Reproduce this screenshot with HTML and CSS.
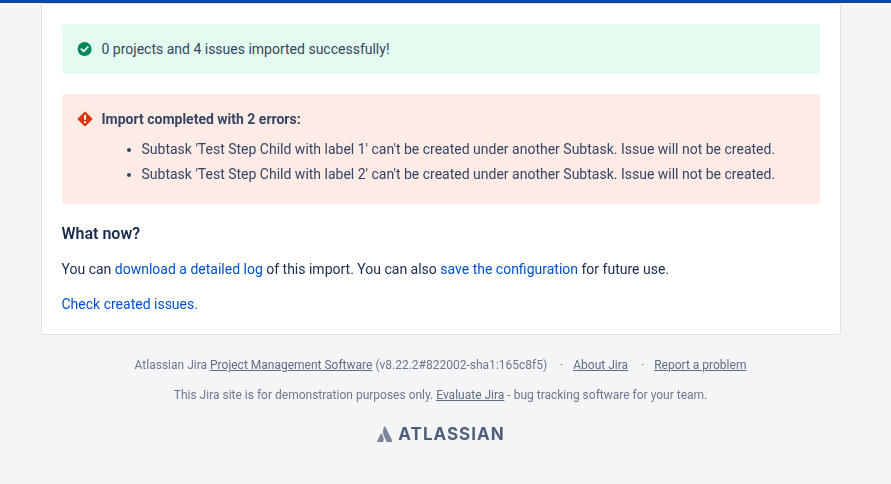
FILE: index.html
```html
<!DOCTYPE html>
<html lang="en">
<head>
    <meta charset="UTF-8">
    <title>Import results</title>
    <link rel="stylesheet" href="styles.css">
</head>
<body>
    <div class="top-bar"></div>
    <div class="page">
        <main class="card">
            <div class="message success">
                <svg class="icon" viewBox="0 0 16 16" width="16" height="16">
                    <circle cx="7.600" cy="8" r="7" fill="#00875a"/>
                    <path d="M4.400 8.200l2.200 2.200 4.200-4.400" fill="none" stroke="#fff" stroke-width="1.8" stroke-linecap="round" stroke-linejoin="round"/>
                </svg>
                <p>0 projects and 4 issues imported successfully!</p>
            </div>
            <div class="message error">
                <svg class="icon" viewBox="0 0 16 16" width="16" height="16">
                    <path d="M8 .8c.4 0 .7.1 1 .4l5.800 5.800c.6.6.6 1.400 0 2l-5.800 5.800c-.6.6-1.400.6-2 0L1.200 9c-.6-.6-.6-1.400 0-2L7 1.200c.3-.3.6-.4 1-.4z" fill="#de350b"/>
                    <rect x="7" y="3.800" width="2" height="5.200" rx="1" fill="#fff"/>
                    <circle cx="8" cy="11.200" r="1.100" fill="#fff"/>
                </svg>
                <div>
                    <p class="message-title">Import completed with 2 errors:</p>
                    <ul>
                        <li>Subtask 'Test Step Child with label 1' can't be created under another Subtask. Issue will not be created.</li>
                        <li>Subtask 'Test Step Child with label 2' can't be created under another Subtask. Issue will not be created.</li>
                    </ul>
                </div>
            </div>
            <h2>What now?</h2>
            <p class="next">You can <a href="#">download a detailed log</a> of this import. You can also <a href="#">save the configuration</a> for future use.</p>
            <p class="check"><a href="#">Check created issues.</a></p>
        </main>
        <footer>
            <ul class="footer-links">
                <li>Atlassian Jira <a href="#">Project Management Software</a> (v8.22.2#822002-sha1:165c8f5)</li>
                <li><a href="#">About Jira</a></li>
                <li><a href="#">Report a problem</a></li>
            </ul>
            <p class="footer-note">This Jira site is for demonstration purposes only. <a href="#">Evaluate Jira</a> - bug tracking software for your team.</p>
            <div class="logo">
                <svg viewBox="-1 0 16 16" width="16" height="16">
                    <path d="M4.700 7.200c-.2-.3-.5-.2-.7.1L.1 15.300c-.2.300 0 .7.400.7h5.300c.2 0 .3-.1.400-.2 1.100-2.400.4-6.100-2-8.600z" fill="#7a869a"/>
                    <path d="M7.500 .5c-2 3.200-1.900 6.500-.6 9.200l2.700 6c.1.200.2.300.4.300h5.300c.4 0 .6-.4.400-.7L8.200 .5C8 .1 7.700.1 7.500.5z" fill="#7a869a"/>
                </svg>
                <span>ATLASSIAN</span>
            </div>
        </footer>
    </div>
</body>
</html>
```

FILE: styles.css
```css
* {
    margin: 0;
    padding: 0;
    box-sizing: border-box;
}

body {
    background-color: #f4f5f7;
    color: #172b4d;
    font-family: Roboto, sans-serif;
    font-size: 14px;
    line-height: 20px;
    height: 484px;
    overflow: hidden;
}

a {
    color: #0052cc;
    text-decoration: none;
}

.top-bar {
    height: 3px;
    background-color: #0747a6;
}

.page {
    width: 881px;
    will-change: opacity;
}

.card {
    width: 800px;
    height: 332px;
    margin: 0 auto;
    padding: 20px;
    background-color: white;
    border: 1px solid #dfe1e6;
    border-radius: 3px;
}

.message {
    display: flex;
    gap: 9px;
    padding: 15px;
    border-radius: 3px;
    color: #344563;
}

.message .icon {
    flex-shrink: 0;
    margin-top: 2px;
}

.success {
    background-color: #e3fcef;
    height: 50px;
    margin-bottom: 20px;
}

.error {
    background-color: #ffebe6;
    height: 110px;
}

.message-title {
    font-weight: 700;
}

.message ul {
    padding-left: 40px;
    margin-top: 10px;
}

.message li {
    margin-top: 5px;
}

h2 {
    font-size: 16px;
    font-weight: 600;
    line-height: 20px;
    margin-top: 20px;
}

.next {
    margin-top: 15px;
}

.check {
    margin-top: 15px;
}

footer {
    color: #6b778c;
    font-size: 12px;
    line-height: 16px;
    text-align: center;
    padding-top: 22px;
}

footer a {
    color: #5e6c84;
    text-decoration: underline;
}

.footer-links {
    display: flex;
    justify-content: center;
    list-style: none;
}

.footer-links li + li::before {
    content: "·";
    margin: 0 10px 0 13px;
}

.footer-note {
    margin-top: 14px;
}

.logo {
    display: flex;
    justify-content: center;
    align-items: center;
    gap: 6px;
    margin-top: 23px;
    color: #505f79;
    font-family: Inter, sans-serif;
    font-size: 17px;
    font-weight: 700;
    letter-spacing: 1px;
}
```
